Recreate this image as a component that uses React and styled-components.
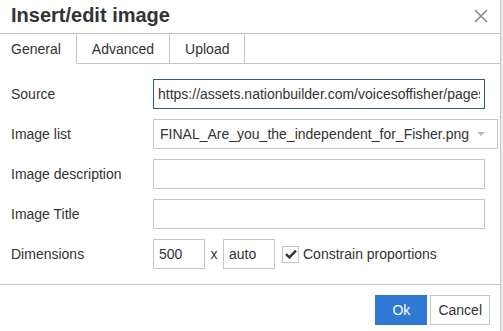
import React from 'react'
import styled, { createGlobalStyle } from 'styled-components'

const GlobalStyle = createGlobalStyle`
    html, body {
        margin: 0;
        padding: 0;
        background: #ececec;
        overflow: hidden;
    }
    body {
        font-family: "Liberation Sans", Arial, sans-serif;
        font-size: 14px;
        color: #333;
    }
`

const fields = [
    { label: 'Source', value: 'https://assets.nationbuilder.com/voicesoffisher/pages/1/attachments/original/FINAL_Are_you_the_independent_for_Fisher.png', focused: true },
    { label: 'Image list', value: 'FINAL_Are_you_the_independent_for_Fisher.png', select: true },
    { label: 'Image description', value: '' },
    { label: 'Image Title', value: '' },
]

const App = () => {
    return (
        <>
            <GlobalStyle />
            <Dialog>
                <Header>
                    <Title>Insert/edit image</Title>
                    <CloseButton>
                        <svg width="14" height="14" viewBox="0 0 14 14">
                            <path d="M1 1 L13 13 M13 1 L1 13" stroke="#8a8a8a" strokeWidth="1.6" fill="none" />
                        </svg>
                    </CloseButton>
                </Header>

                <Tabs>
                    <Tab active>General</Tab>
                    <Tab>Advanced</Tab>
                    <Tab>Upload</Tab>
                    <TabFill />
                </Tabs>

                <Body>
                    { fields.map(f => (
                        <Row key={f.label}>
                            <Label>{f.label}</Label>
                            { f.select ?
                                <SelectBox>
                                    <SelectText>{f.value}</SelectText>
                                    <Caret />
                                </SelectBox>
                            :
                                <TextInput focused={f.focused} value={f.value} readOnly />
                            }
                        </Row>
                    ))}
                    <Row>
                        <Label>Dimensions</Label>
                        <SmallInput value="500" readOnly />
                        <Times>x</Times>
                        <SmallInput value="auto" readOnly />
                        <Check>
                            <svg width="12" height="10" viewBox="0 0 12 10">
                                <path d="M1 5.2 L4.4 8.4 L11 1.6" stroke="#333" strokeWidth="2.4" fill="none" />
                            </svg>
                        </Check>
                        <CheckLabel>Constrain proportions</CheckLabel>
                    </Row>
                </Body>

                <Footer>
                    <Button primary>Ok</Button>
                    <Button>Cancel</Button>
                </Footer>
            </Dialog>
        </>
    )
}

const Dialog = styled.div`
    width: 504px;
    margin-left: -4px;
    background: #fff;
    border-right: 1px solid #c5c5c5;
    display: flex;
    flex-direction: column;
`

const Header = styled.div`
    height: 30px;
    padding: 0 12px 3px 15px;
    display: flex;
    align-items: center;
    border-bottom: 1px solid #c5c5c5;
`

const Title = styled.div`
    font-size: 20px;
    font-weight: bold;
    color: #333;
`

const CloseButton = styled.div`
    margin-left: auto;
    display: flex;
    align-items: center;
    padding-top: 1px;
`

const Tabs = styled.div`
    display: flex;
    height: 30px;
`

const Tab = styled.div`
    padding: 0 15px;
    display: flex;
    align-items: center;
    border-right: 1px solid #c5c5c5;
    border-bottom: 1px solid ${props => props.active ? 'transparent' : '#c5c5c5'};
    color: #333;
    font-size: 14px;
`

const TabFill = styled.div`
    flex: 1;
    border-bottom: 1px solid #c5c5c5;
`

const Body = styled.div`
    padding: 15px;
    display: flex;
    flex-direction: column;
    gap: 10px;
    border-bottom: 1px solid #c5c5c5;
`

const Row = styled.div`
    display: flex;
    align-items: center;
    height: 30px;
`

const Label = styled.div`
    width: 142px;
    flex-shrink: 0;
    color: #333;
`

const TextInput = styled.input`
    flex: 1;
    min-width: 0;
    box-sizing: border-box;
    height: 30px;
    margin: 0;
    border: 1px solid ${props => props.focused ? '#2f5f8e' : '#c5c5c5'};
    border-radius: 0;
    padding: 0 4px;
    outline: none;
    background: #fff;
    font-family: "Liberation Sans", Arial, sans-serif;
    font-size: 14px;
    color: #333;
`

const SelectBox = styled.div`
    flex: 1;
    box-sizing: border-box;
    height: 30px;
    border: 1px solid #c5c5c5;
    padding: 0 12px 0 6px;
    display: flex;
    align-items: center;
    gap: 8px;
`

const SelectText = styled.div`
    flex: 1;
    white-space: nowrap;
    overflow: hidden;
`

const Caret = styled.div`
    width: 0;
    height: 0;
    border-left: 4px solid transparent;
    border-right: 4px solid transparent;
    border-top: 4px solid #bbb;
`

const SmallInput = styled(TextInput)`
    flex: none;
    width: 52px;
    padding: 0 5px;
`

const Times = styled.div`
    width: 18px;
    text-align: center;
`

const Check = styled.div`
    box-sizing: border-box;
    width: 17px;
    height: 17px;
    margin-left: 7px;
    border: 1px solid #c5c5c5;
    display: flex;
    align-items: center;
    justify-content: center;
`

const CheckLabel = styled.div`
    margin-left: 4px;
`

const Footer = styled.div`
    padding: 10px 10px 7px 0;
    display: flex;
    justify-content: flex-end;
    gap: 3px;
`

const Button = styled.div`
    box-sizing: border-box;
    height: 30px;
    min-width: ${props => props.primary ? '52px' : 'auto'};
    padding: 0 7px;
    display: flex;
    align-items: center;
    justify-content: center;
    background: ${props => props.primary ? '#2f78d3' : '#fff'};
    color: ${props => props.primary ? '#fff' : '#333'};
    border: 1px solid ${props => props.primary ? '#2f78d3' : '#c5c5c5'};
    font-size: 14px;
`

export default App
